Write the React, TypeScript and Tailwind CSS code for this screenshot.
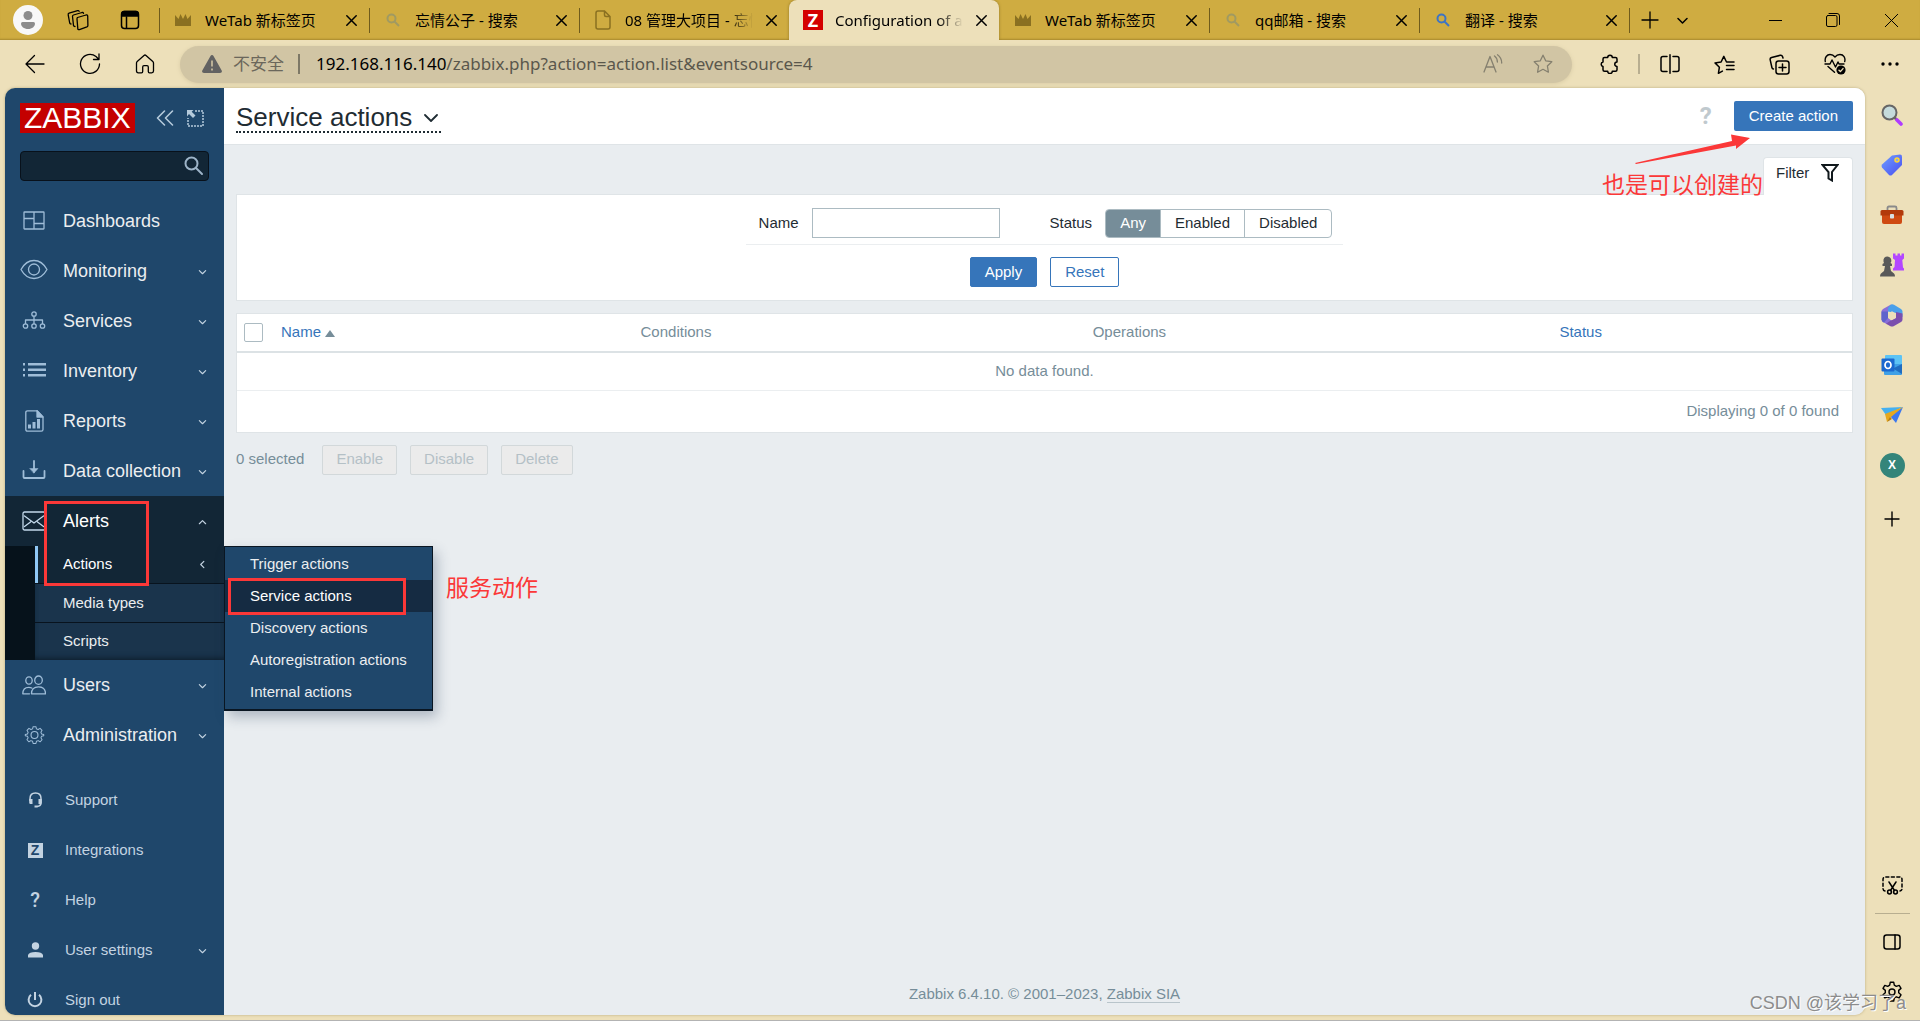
import type { ReactNode } from "react";
import { clsx } from "clsx";

type IconProps = { children: ReactNode; size?: number; box?: string; width?: number; className?: string };

// Line icon helper, every drawing below is stroked with the current colour
function Line({ children, size = 20, box = "0 0 20 20", width = 1.3, className }: IconProps) {
  return (
    <svg
      width={size}
      height={size}
      viewBox={box}
      fill="none"
      stroke="currentColor"
      strokeWidth={width}
      strokeLinecap="round"
      strokeLinejoin="round"
      className={clsx("shrink-0", className)}
      aria-hidden="true"
    >
      {children}
    </svg>
  );
}

const CrownIcon = () => (
  <svg width="16" height="12" viewBox="0 0 16 12" fill="#8a7021" aria-hidden="true">
    <path d="M0 1L3.500 5 5.500 0 8 5 10.500 0 12.500 5 16 1V12H0z" />
  </svg>
);

const TabSearchIcon = ({ color }: { color: string }) => (
  <svg width="14" height="14" viewBox="0 0 14 14" fill="none" stroke={color} strokeWidth="2" aria-hidden="true">
    <circle cx="5.500" cy="5.500" r="4" />
    <path d="M8.500 8.500l4.500 4.500" />
  </svg>
);

const PageIcon = () => (
  <svg width="16" height="20" viewBox="0 0 16 20" fill="none" stroke="#8a7021" strokeWidth="1.500" aria-hidden="true">
    <path d="M3 1h6.500L15 6.500V17a2 2 0 01-2 2H3a2 2 0 01-2-2V3a2 2 0 012-2zM9.500 1v4a1.500 1.500 0 001.500 1.500h4" />
  </svg>
);

const ZabbixFavicon = () => (
  <span className="flex h-5 w-5 items-center justify-center bg-[#d40000] text-lg leading-5 font-bold text-white">Z</span>
);

const tabs = [
  { title: "WeTab 新标签页", icon: <CrownIcon />, line: true },
  { title: "忘情公子 - 搜索", icon: <TabSearchIcon color="#a09a62" />, line: true },
  { title: "08 管理大项目 - 忘情", icon: <PageIcon />, line: true, fade: true },
  { title: "Configuration of actions", icon: <ZabbixFavicon />, active: true, fade: true },
  { title: "WeTab 新标签页", icon: <CrownIcon /> },
  { title: "qq邮箱 - 搜索", icon: <TabSearchIcon color="#a09a62" />, line: true },
  { title: "翻译 - 搜索", icon: <TabSearchIcon color="#3d74c4" />, line: true },
];

function TabBar() {
  return (
    <div className="flex h-10 shrink-0 items-stretch bg-[#cfac41] pl-[3px] shadow-[inset_0_-2px_2px_-1px_#a88a2e]">
      <button aria-label="Profile" className="flex w-[50px] items-center justify-center">
        <svg width="30" height="30" viewBox="0 0 30 30" aria-hidden="true">
          <circle cx="15" cy="15" r="15" fill="#f8f8f8" />
          <circle cx="15" cy="10.500" r="4.500" fill="#8c8c8c" />
          <path d="M8 18.500a1.500 1.500 0 011.500-1.500h11a1.500 1.500 0 011.500 1.500c0 3-3 5.500-7 5.500s-7-2.500-7-5.500z" fill="#8c8c8c" />
        </svg>
      </button>
      <button aria-label="Workspaces" className="flex w-[50px] items-center justify-center">
        <Line size={22} box="0 0 22 22">
          <path d="M10.500 8.500l8.500-2.500q1.500-.4 1.700 1l.2 9.500q0 1-1 1.400l-7.500 2.700q-1.500.4-1.600-1l-.8-9.600q0-1.100.5-1.500z" />
          <path d="M8 17.500q-1.200 0-1.500-1L5.500 7.500q0-1.200 1-1.500l8.500-2.500q1.200-.3 1.500.8" />
          <path d="M4 15q-1 0-1.300-1L1.200 5.800q-.2-1.300.9-1.600l8.500-2.500q1.100-.3 1.500.6" />
        </Line>
      </button>
      <button aria-label="Tab actions" className="flex w-[54px] items-center justify-center">
        <Line size={20} width={1.5}>
          <rect x="1.500" y="1.500" width="17" height="17" rx="3" />
          <path d="M2 3.500q0-2 2-2h12q2 0 2 2V6H2z" fill="currentColor" />
          <path d="M6.500 7v11" />
        </Line>
      </button>
      <div className="ml-0.5 flex max-w-[1470px] flex-1">
        {tabs.map((tab, i) => (
          <div
            key={i}
            className={clsx(
              "relative flex min-w-0 flex-1 items-center",
              tab.active && "rounded-t-lg bg-[#ede0ba] shadow-[0_0_3px_#8f7524] [clip-path:inset(0_-4px_0_-4px)]",
            )}
          >
            <span className={clsx("h-[25px] w-px", tab.line && "bg-[#6f5b1c]")} />
            <span className="ml-[13px] flex w-5 shrink-0 justify-center">{tab.icon}</span>
            <a
              href="#tab"
              className={clsx(
                "mr-2 ml-3 min-w-0 flex-1 overflow-hidden text-[15px] whitespace-nowrap text-black",
                tab.fade && "[mask-image:linear-gradient(to_right,black_80%,transparent)]",
              )}
            >
              {tab.title}
            </a>
            <button aria-label="Close tab" className="mr-2 flex w-5 justify-center">
              <Line size={11} box="0 0 11 11" width={1.5}>
                <path d="M.8.800l9.400 9.400M10.200.800L.8 10.200" />
              </Line>
            </button>
          </div>
        ))}
      </div>
      <span className="h-[25px] w-px self-center bg-[#6f5b1c]" />
      <button aria-label="New tab" className="ml-0.5 flex w-9 items-center justify-center">
        <Line size={18} box="0 0 18 18">
          <path d="M9 1v16M1 9h16" />
        </Line>
      </button>
      <button aria-label="Tab menu" className="flex w-7 items-center justify-center">
        <Line size={11} box="0 0 11 11" width={1.5}>
          <path d="M1 3.500l4.500 4.500L10 3.500" />
        </Line>
      </button>
      <div className="ml-auto flex">
        <button aria-label="Minimize" className="flex w-[58px] items-center justify-center">
          <Line size={13} box="0 0 13 13" width={1}>
            <path d="M0 6.500h13" />
          </Line>
        </button>
        <button aria-label="Restore" className="flex w-[58px] items-center justify-center">
          <Line size={14} box="0 0 14 14" width={1}>
            <rect x=".5" y="2.500" width="10.500" height="11" rx="1.500" />
            <path d="M3 .5h8q2.500 0 2.500 2.500v8.500" />
          </Line>
        </button>
        <button aria-label="Close" className="flex w-[58px] items-center justify-center">
          <Line size={13} box="0 0 13 13" width={1}>
            <path d="M0 0l13 13M13 0L0 13" />
          </Line>
        </button>
      </div>
    </div>
  );
}

const STAR = "M10 1.200l2.700 5.600 6.100.9-4.400 4.300 1 6.200L10 15.300l-5.400 2.900 1-6.200L1.200 7.700l6.100-.9z";

function AddressBar() {
  const slot = "flex h-full w-[55px] shrink-0 items-center justify-center";
  return (
    <div className="flex h-12 shrink-0 items-center pr-[3px] pl-[7px] text-black">
      <button aria-label="Back" className={slot}>
        <Line>
          <path d="M19 10H1M9.500 1.500L1 10l8.500 8.500" />
        </Line>
      </button>
      <button aria-label="Refresh" className={slot}>
        <Line size={22} box="0 0 22 22">
          <path d="M20.500 11A9.500 9.500 0 1117 3.500l2.500 2.500M20 1v5.500h-5.500" />
        </Line>
      </button>
      <button aria-label="Home" className={slot}>
        <Line size={20}>
          <path d="M1.500 9q0-1 .7-1.600L9 1.500q1-.9 2 0l6.800 5.900q.7.600.7 1.600v8q0 1.800-1.800 1.800h-2.200q-1.200 0-1.200-1.200V13q0-1.300-1.300-1.300H9q-1.300 0-1.300 1.300v4.600q0 1.200-1.200 1.200H3.300q-1.800 0-1.800-1.800z" />
        </Line>
      </button>
      <div className="mr-[10px] ml-2 flex h-[37px] min-w-0 flex-1 items-center rounded-full bg-[#d1c5a4] pr-1 pl-[22px] shadow-[0_1px_4px_#d8cba5]">
        <svg width="20" height="18" viewBox="0 0 20 18" aria-hidden="true">
          <path d="M10 0q1 0 1.500 1l8.200 14.500q.9 2.500-1.700 2.500H2q-2.600 0-1.700-2.500L8.500 1Q9 0 10 0z" fill="#626262" />
          <path d="M10 5.500v6M10 13.500v2" stroke="#d1c5a4" strokeWidth="1.600" />
        </svg>
        <button className="ml-[11px] text-[17px] text-[#6b675b]">不安全</button>
        <span className="ml-[14px] h-5 w-0.5 bg-[#7d7866]" />
        <div role="textbox" aria-label="Address" className="ml-4 min-w-0 flex-1 truncate text-[17px] text-[#5a574c]">
          <span className="text-black">192.168.116.140</span>/zabbix.php?action=action.list&amp;eventsource=4
        </div>
        <button aria-label="Read aloud" className="flex w-[50px] justify-center text-[#85806f]">
          <Line size={20}>
            <path d="M1 18L7 2.500 13 18M3 13h8M11.500 2q2.800 2 2.900 6M14.500.8Q18.600 3.500 18.700 9" />
          </Line>
        </button>
        <button aria-label="Favorite" className="flex w-[50px] justify-center text-[#85806f]">
          <Line size={20}>
            <path d={STAR} />
          </Line>
        </button>
      </div>
      <button aria-label="Extensions" className={slot}>
        <Line size={20} width={1.5}>
          <path d="M4.500 3.500h3.200a2.300 2.300 0 014.600 0h3.200q1.500 0 1.500 1.500v3a2 2 0 100 4.500v3.200q0 1.500-1.500 1.500h-3.200a2.300 2.300 0 01-4.600 0H4.500Q3 17.200 3 15.700v-3.200a2.300 2.300 0 010-4.500V5q0-1.500 1.500-1.500z" />
        </Line>
      </button>
      <span className="mr-0.5 ml-px h-5 w-0.5 shrink-0 bg-[#b8ae90]" />
      <button aria-label="Split screen" className={slot}>
        <Line size={20} width={1.5}>
          <path d="M7 2.500H3q-2 0-2 2v11q0 2 2 2h4M13 2.500h4q2 0 2 2v11q0 2-2 2h-4M10 .800v18.400" />
        </Line>
      </button>
      <button aria-label="Favorites" className={slot}>
        <Line size={21} box="0 0 21 20" width={1.5}>
          <path d="M13 7.500h-.5l-2.700-5.600-2.700 5.600-6.100.9 4.400 4.300-1 6.100 4-2.200M13 7.500h7M12.500 11h7.500M12.500 15h7.500" />
        </Line>
      </button>
      <button aria-label="Collections" className={slot}>
        <Line size={21} box="0 0 21 21" width={1.5}>
          <rect x="7" y="7" width="13" height="13" rx="2.500" />
          <path d="M13.500 10v7M10 13.500h7M4.500 15q-1.300-.2-1.600-1.500L1.200 5.800Q.8 4 2.600 3.500l8.600-2.200q1.700-.4 2.300 1.200l.5 1.500" />
        </Line>
      </button>
      <button aria-label="Browser essentials" className={slot}>
        <Line size={22} box="0 0 22 22" width={1.4}>
          <path d="M1.300 8.500C.5 4.500 3 1.500 6 1.500q3 0 5 2.500 2-2.500 5-2.500c3.500 0 5.700 3.200 4.700 7M1 11h5l2-4 3.500 7 2.500-5 1 2h5M4 13.500l6.500 5.800" />
          <circle cx="17" cy="17" r="4.600" fill="currentColor" stroke="none" />
          <path d="M15 17.200l1.400 1.400 2.600-3" stroke="#ede0ba" />
        </Line>
      </button>
      <button aria-label="Settings and more" className={slot}>
        <svg width="18" height="4" viewBox="0 0 18 4" aria-hidden="true">
          <circle cx="2" cy="2" r="1.700" />
          <circle cx="9" cy="2" r="1.700" />
          <circle cx="16" cy="2" r="1.700" />
        </svg>
      </button>
    </div>
  );
}

const Chevron = ({ d = "M1.500 4L5 7.500 8.500 4" }: { d?: string }) => (
  <Line size={9} box="0 0 10 10" width={1.3} className="ml-auto text-[#c3d3e1]">
    <path d={d} />
  </Line>
);

const menuIcons = {
  dashboards: (
    <Line size={24} box="0 0 24 20" width={1.3}>
      <path d="M2.500 1h19q.5 0 .5.500v16q0 .500-.5.500h-19Q2 18 2 17.500v-16q0-.5.500-.5zM12 1v17M2 7.500h10M12 12.500h10" />
    </Line>
  ),
  monitoring: (
    <Line size={28} box="0 0 28 22" width={1.3}>
      <path d="M1 9.500q5-9 13-9t13 9q-5 9-13 9t-13-9z" />
      <circle cx="14" cy="9.500" r="5.500" />
    </Line>
  ),
  services: (
    <Line size={24} box="0 0 24 20" width={1.3}>
      <circle cx="12" cy="3" r="2.200" />
      <circle cx="3.500" cy="15" r="2.200" />
      <circle cx="12" cy="15" r="2.200" />
      <circle cx="20.500" cy="15" r="2.200" />
      <path d="M12 5.500v7M3.500 12.500V9h17v3.500" />
    </Line>
  ),
  inventory: (
    <svg width="24" height="18" viewBox="0 0 24 18" fill="currentColor" aria-hidden="true">
      <path d="M1 1h2v2.500H1zM1 6.500h2V9H1zM1 12h2v2.500H1zM6 1h18v2.500H6zM6 6.500h18V9H6zM6 12h18v2.500H6z" />
    </svg>
  ),
  reports: (
    <Line size={23} box="0 0 20 23" width={1.3}>
      <path d="M3 .800h9.500L18.500 7v12.500q0 1.700-1.700 1.700H3q-1.700 0-1.700-1.700v-17Q1.300.800 3 .800z" />
      <path d="M12.500.800V7h6z" fill="currentColor" />
      <path d="M5 14.500v4M9.500 12v6.500M14 9v9.500" strokeWidth="3" strokeLinecap="butt" />
    </Line>
  ),
  data: (
    <Line size={24} box="0 0 24 22" width={1.8}>
      <path d="M1.500 11v6q0 1 1 1h19q1 0 1-1v-6M12 1v11" />
      <path d="M8 8.500h8l-4 4.500z" fill="currentColor" strokeWidth=".5" />
    </Line>
  ),
  alerts: (
    <Line size={24} box="0 0 24 20" width={1.3}>
      <rect x="1" y="1" width="22" height="18" rx="1.500" />
      <path d="M2.500 5l9.500 7 9.500-7M2.500 15.500l6-4.500M21.500 15.500l-6-4.500" />
    </Line>
  ),
  users: (
    <Line size={24} box="0 0 24 20" width={1.3}>
      <ellipse cx="7" cy="5.500" rx="3.200" ry="3.700" />
      <ellipse cx="16.500" cy="5.200" rx="3.800" ry="4.200" />
      <path d="M9.500 18.800q0-7 7-7t7 7zM7.500 18.800H.8q0-6.500 6-6.500 1.700 0 3 .700" />
    </Line>
  ),
  administration: (
    <Line size={21} box="0 0 22 23" width={1.2}>
      <circle cx="11" cy="11" r="3.800" />
      <path
        d="M9.300 1h3.400l.6 2.600 2 .8 2.300-1.400 2.400 2.400-1.400 2.300.8 2 2.600.6v1.400l-2.600.6-.8 2 1.400 2.300-2.400 2.400-2.300-1.400-2 .8-.6 2.600H9.300l-.6-2.600-2-.8L4.400 19 2 16.600l1.400-2.300-.8-2L0 11.700v-1.400l2.600-.6.8-2L2 5.400 4.400 3l2.300 1.400 2-.8z"
        transform="translate(.9 .9) scale(.92)"
      />
    </Line>
  ),
};

const menuTop = [
  { label: "Dashboards", icon: menuIcons.dashboards, leaf: true },
  { label: "Monitoring", icon: menuIcons.monitoring },
  { label: "Services", icon: menuIcons.services },
  { label: "Inventory", icon: menuIcons.inventory },
  { label: "Reports", icon: menuIcons.reports },
  { label: "Data collection", icon: menuIcons.data },
];

const menuBottom = [
  { label: "Users", icon: menuIcons.users },
  { label: "Administration", icon: menuIcons.administration },
];

const actionPages = ["Trigger actions", "Service actions", "Discovery actions", "Autoregistration actions", "Internal actions"];

const support = [
  {
    label: "Support",
    icon: (
      <svg width="15" height="16" viewBox="0 0 15 16" aria-hidden="true">
        <path d="M2 9V6.500Q2 1 7.500 1T13 6.500V11q0 3-4 3.500" fill="none" stroke="currentColor" strokeWidth="1.500" />
        <path d="M1.200 7h3.300v5H2.500q-1.300 0-1.300-1.500zM10.500 7h3.300v3.500q0 1.500-1.300 1.500h-2zM6.500 13.500h3V15.500h-3z" fill="currentColor" />
      </svg>
    ),
  },
  {
    label: "Integrations",
    icon: (
      <span className="flex h-[15px] w-[15px] items-center justify-center bg-[#c3d3e1] text-sm leading-none font-bold text-[#1f476b]">
        Z
      </span>
    ),
  },
  { label: "Help", icon: <span className="text-xl leading-none font-medium [font-family:Roboto,sans-serif]">?</span> },
  {
    label: "User settings",
    expandable: true,
    icon: (
      <svg width="15" height="16" viewBox="0 0 15 16" fill="currentColor" aria-hidden="true">
        <circle cx="7.500" cy="4" r="3.700" />
        <path d="M0 15.500V13q1-3 7.500-3t7.500 3v2.500z" />
      </svg>
    ),
  },
  {
    label: "Sign out",
    icon: (
      <svg width="16" height="16" viewBox="0 0 16 16" fill="none" stroke="currentColor" strokeWidth="2" aria-hidden="true">
        <path d="M8 0v8M4 2.800a6.400 6.400 0 108 0" />
      </svg>
    ),
  },
];

function MenuItem({ label, icon, leaf }: { label: string; icon: ReactNode; leaf?: boolean }) {
  return (
    <li>
      <a href="#menu" className="flex h-[50px] items-center pr-[17px] pl-[15px] text-lg text-[#ebeef0]">
        <span className="mr-[15px] flex w-7 justify-center text-[#9fbdd8]">{icon}</span>
        {label}
        {!leaf && <Chevron />}
      </a>
    </li>
  );
}

function Sidebar() {
  return (
    <aside className="relative z-10 w-[219px] shrink-0 bg-[#1f476b] pt-[15px]">
      <div className="flex items-center px-[15px]">
        <a href="#home" className="flex h-[30px] items-center bg-[#c40000] px-1 text-[30px] leading-[30px] text-white">
          ZABBIX
        </a>
        <button aria-label="Collapse sidebar" className="ml-5 text-[#b5cadb]">
          <Line size={20} width={1.6}>
            <path d="M9.500 3L2.500 10l7 7M17.500 3L10.500 10l7 7" />
          </Line>
        </button>
        <button aria-label="Hide sidebar" className="ml-3 text-[#b5cadb]">
          <svg width="17" height="17" viewBox="0 0 17 17" fill="none" stroke="currentColor" aria-hidden="true">
            <path d="M8 1h8v15H1V8" strokeWidth="1.500" strokeDasharray="2 1" />
            <path d="M0 0h6.500L4.700 1.800 8.500 5.600 6 8 2 4 .0 6.500z" fill="currentColor" stroke="none" />
          </svg>
        </button>
      </div>
      <form className="mx-[15px] mt-[18px] flex h-[30px] items-center rounded-sm border border-[#08111b] bg-[#122636] pr-1">
        <input
          type="text"
          aria-label="Search"
          className="min-w-0 flex-1 bg-transparent px-2 text-[15px] text-white outline-none"
        />
        <button aria-label="Run search" type="button" className="text-[#9db4c8]">
          <Line size={20} width={2}>
            <circle cx="7.500" cy="7.500" r="6" />
            <path d="M12 12l6 6" />
          </Line>
        </button>
      </form>
      <nav className="mt-[15px]">
        <ul>
          {menuTop.map((item) => (
            <MenuItem key={item.label} {...item} />
          ))}
          <li className="relative">
            <a href="#alerts" className="flex h-[50px] items-center bg-[#122636] pr-[17px] pl-[15px] text-lg text-white">
              <span className="mr-[15px] flex w-7 justify-center text-[#c3d9ec]">{menuIcons.alerts}</span>
              Alerts
              <Chevron d="M1.500 7.500L5 4l3.500 3.500" />
            </a>
            <ul className="border-l-[30px] border-[#06121b] bg-[#1a344c] text-[15px] text-[#ebeef0] shadow-[inset_0_5px_6px_-4px_#0b1a27,inset_0_-5px_6px_-4px_#0b1a27]">
              <li className="flex h-[38px] border-b border-[#08131e] bg-[#122636]">
                <a href="#actions" className="flex flex-1 items-center border-l-[3px] border-[#8fc7f5] pr-[17px] pl-[25px] text-white">
                  Actions
                  <Chevron d="M6.500 1.500L3 5l3.500 3.500" />
                </a>
              </li>
              <li className="flex h-[39px] items-center border-b border-[#08131e] pl-7">
                <a href="#media">Media types</a>
              </li>
              <li className="flex h-[37px] items-center pl-7">
                <a href="#scripts">Scripts</a>
              </li>
            </ul>
            <ul className="absolute top-[50px] left-full w-[209px] border-x border-t border-b-2 border-[#0a1622] bg-[#1f476b] py-px text-[15px] text-[#ebeef0] shadow-[4px_6px_12px_rgba(40,60,90,0.3)]">
              {actionPages.map((page) => (
                <li key={page} className={clsx("flex h-8 items-center pl-[25px]", page === "Service actions" && "bg-[#152b42] text-white")}>
                  <a href="#page">{page}</a>
                </li>
              ))}
            </ul>
            {/* red marks over the menu */}
            <span className="absolute top-[5px] left-[39px] h-[85px] w-[105px] border-[3px] border-[#fb3838]" />
            <span className="absolute top-[82px] left-[223px] h-[37px] w-[178px] border-[3px] border-[#fb3838]" />
            <span className="absolute top-[75px] left-[441px] text-[23px] whitespace-nowrap text-[#fb3838]">服务动作</span>
          </li>
          {menuBottom.map((item) => (
            <MenuItem key={item.label} {...item} />
          ))}
        </ul>
        <ul className="mt-[15px]">
          {support.map((item) => (
            <li key={item.label}>
              <a href="#support" className="flex h-[50px] items-center pr-[17px] pl-[15px] text-[15px] text-[#c3d3e1]">
                <span className="mr-[15px] flex w-[30px] justify-center">{item.icon}</span>
                {item.label}
                {item.expandable && <Chevron />}
              </a>
            </li>
          ))}
        </ul>
      </nav>
    </aside>
  );
}

function Filter() {
  return (
    <>
      <div className="flex justify-end">
        <a
          href="#filter"
          className="relative -mb-px flex h-[38px] w-[90px] items-start rounded-t-sm border border-b-0 border-[#dfe4e7] bg-white pt-[6px] pl-3 leading-[18px]"
        >
          Filter
          <svg width="18" height="18" viewBox="0 0 18 18" fill="none" stroke="#10181c" strokeWidth="2" className="ml-3" aria-hidden="true">
            <path d="M1.500 1h15L11 8V16.500L7.500 14.500V8z" />
          </svg>
        </a>
      </div>
      <form className="flex flex-col items-center border border-[#dfe4e7] bg-white py-[13px]">
        <div className="flex items-center border-b border-[#ebeef0] pr-[11px] pb-[6px] pl-[13px]">
          <label htmlFor="name">Name</label>
          <input id="name" type="text" className="ml-[13px] h-[30px] w-[188px] border border-[#acbbc2] px-1" />
          <div role="radiogroup" aria-labelledby="status-label" className="ml-[50px] flex items-center">
            <span id="status-label">Status</span>
            <div className="ml-[13px] flex h-[29px] overflow-hidden rounded-sm border border-[#acbbc2]">
              {["Any", "Enabled", "Disabled"].map((value) => (
                <label
                  key={value}
                  className="flex items-center border-l border-[#acbbc2] px-[14px] first:border-l-0 has-checked:bg-[#768d99] has-checked:text-white"
                >
                  <input type="radio" name="status" defaultChecked={value === "Any"} className="absolute appearance-none" />
                  {value}
                </label>
              ))}
            </div>
          </div>
        </div>
        <div className="mt-3 flex gap-[13px]">
          <button type="button" className="h-[30px] rounded-xs border border-[#3675ba] bg-[#3675ba] px-[14px] text-white">
            Apply
          </button>
          <button type="button" className="h-[30px] rounded-xs border border-[#3675ba] px-[14px] text-[#3675ba]">
            Reset
          </button>
        </div>
      </form>
    </>
  );
}

function ActionsTable() {
  return (
    <div className="mt-3 border border-[#dfe4e7] bg-white text-[#768d99]">
      <table className="w-full table-fixed border-collapse text-left">
        <colgroup>
          <col className="w-9" />
          <col className="w-[22.2%]" />
          <col className="w-[28%]" />
          <col className="w-[28.9%]" />
          <col />
        </colgroup>
        <thead>
          <tr className="h-[38px] border-b-2 border-[#dce2e5]">
            <th className="pl-[7px]">
              <input
                type="checkbox"
                aria-label="Select all"
                className="block h-[19px] w-[19px] appearance-none rounded-xs border border-[#acbbc2] bg-white"
              />
            </th>
            <th className="pl-2 font-normal">
              <a href="#name" className="flex items-center text-[#3675ba]">
                Name
                <svg width="10" height="7" viewBox="0 0 10 7" fill="#768d99" className="mt-0.5 ml-1" aria-hidden="true">
                  <path d="M5 0l5 7H0z" />
                </svg>
              </a>
            </th>
            <th className="pl-[9px] font-normal">Conditions</th>
            <th className="pl-[9px] font-normal">Operations</th>
            <th className="pl-[9px] font-normal">
              <a href="#status" className="text-[#3675ba]">
                Status
              </a>
            </th>
          </tr>
        </thead>
        <tbody>
          <tr className="h-[38px] border-b border-[#ebeef0]">
            <td colSpan={5} className="text-center">
              No data found.
            </td>
          </tr>
        </tbody>
      </table>
      <div className="flex h-[41px] items-center justify-end pr-[13px]">Displaying 0 of 0 found</div>
    </div>
  );
}

function Main() {
  return (
    <main className="relative flex min-w-0 flex-1 flex-col bg-[#e9edf0] text-[15px] text-[#1f2c33]">
      <header className="flex h-[57px] shrink-0 items-center border-b border-[#dfe4e7] bg-white px-3">
        <h1>
          <button className="flex items-center gap-3 border-b-2 border-dotted border-[#1f2c33] pt-[3px] pr-[3px] text-[26px] leading-[28px]">
            Service actions
            <Line size={14} box="0 0 14 14" width={1.8}>
              <path d="M1 5l6 6 6-6" />
            </Line>
          </button>
        </h1>
        <a
          href="#help"
          aria-label="Help"
          className="mr-[22px] ml-auto text-2xl leading-none font-bold text-[#c0c9ce] [font-family:Roboto,sans-serif]"
        >
          ?
        </a>
        <button className="h-[30px] rounded-xs bg-[#3675ba] px-[15px] text-white">Create action</button>
      </header>
      {/* red note that points at the create button */}
      <div className="absolute top-[46px] right-[102px] z-10 flex flex-col items-end text-[#fb3838]">
        <svg width="118" height="32" viewBox="0 0 118 32" fill="currentColor" className="mr-3" aria-hidden="true">
          <path d="M2 29L99 7l-1-6.500L117 4l-14 11v-3.500L3 30z" />
        </svg>
        <span className="mt-1 text-[23px] leading-[30px]">也是可以创建的</span>
      </div>
      <div className="flex flex-1 flex-col px-3 pt-3 pb-[11px]">
        <Filter />
        <ActionsTable />
        <div className="mt-3 flex items-center gap-[13px]">
          <span className="mr-[5px] text-[#768d99]">0 selected</span>
          {["Enable", "Disable", "Delete"].map((label) => (
            <button key={label} disabled className="h-[30px] rounded-xs border border-[#d2d8da] bg-[#ebebeb] px-[13px] text-[#b4c0c6]">
              {label}
            </button>
          ))}
        </div>
        <footer className="mt-auto text-center leading-5 text-[#768d99]">
          Zabbix 6.4.10. © 2001–2023,{" "}
          <a href="#zabbix" className="border-b border-[#b9c5cb]">
            Zabbix SIA
          </a>
        </footer>
      </div>
    </main>
  );
}

const apps = [
  {
    label: "Search",
    icon: (
      <svg width="22" height="22" viewBox="0 0 22 22" aria-hidden="true">
        <path d="M13.500 13.500l2 2" stroke="#666" strokeWidth="2.500" />
        <path d="M16 16l4 4" stroke="#b03bff" strokeWidth="3.600" strokeLinecap="round" />
        <circle cx="8.500" cy="8.500" r="7" fill="#c5dbdc" stroke="#666" strokeWidth="2" />
      </svg>
    ),
  },
  {
    label: "Shopping",
    icon: (
      <svg width="22" height="22" viewBox="0 0 22 22" aria-hidden="true">
        <defs>
          <linearGradient id="tag" x1="0" y1="0" x2="1" y2="1">
            <stop offset="0" stopColor="#6fa0ff" />
            <stop offset="1" stopColor="#4a4df0" />
          </linearGradient>
        </defs>
        <path d="M11 1.500L19 .500q2 0 2 2v8.500L11 21q-1.500 1-3 0L1 13.500q-1-1.500 0-3z" fill="url(#tag)" />
        <circle cx="16" cy="6" r="2" fill="#8ba7e8" stroke="#ffd633" strokeWidth="1.500" />
      </svg>
    ),
  },
  {
    label: "Tools",
    icon: (
      <svg width="24" height="20" viewBox="0 0 24 20" aria-hidden="true">
        <path d="M7.500 6V3q0-1.500 1.500-1.500h6q1.500 0 1.500 1.500v3" fill="none" stroke="#8a8a8a" strokeWidth="1.800" />
        <path d="M2 8h20v9q0 2-2 2H4q-2 0-2-2z" fill="#cf4a12" />
        <path d="M2 5h20q1.500 0 1.500 1.500v4H.500v-4Q.500 5 2 5z" fill="#b23a0b" />
        <rect x="10" y="9" width="4" height="4.500" rx=".8" fill="#d8e0e4" />
      </svg>
    ),
  },
  {
    label: "Games",
    icon: (
      <svg width="24" height="24" viewBox="0 0 24 24" aria-hidden="true">
        <path d="M13 .5h2.500v2h2v-2H20v2h1.500v-2H24v5l-1.700 1.500.7 7.500 1 1v2H13v-2l1.500-1.500.5-7L13 5.500z" fill="#b347ff" />
        <path d="M3.500 6.500a4 4 0 117 3.500l1.500 1v2h-2l1 5 3 2.500q1 1 1 3H0q0-2 1-3l3-2.500 1-5H2.500v-2L4 10q-.8-1.500-.5-3.500z" fill="#595959" />
      </svg>
    ),
  },
  {
    label: "Microsoft 365",
    icon: (
      <svg width="22" height="23" viewBox="0 0 22 23" aria-hidden="true">
        <path d="M10 .500L2 5Q.5 6 .5 7.500v8q0 1.500 1.500 2.500l4 2.300L11 17l-4-3V7.500L12 4z" fill="#8a6fd8" />
        <path d="M10 .500q1.500-.5 3 .3L20 5q1.500 1 1.500 2.500V13L15 9 7 7.500V4z" fill="#4aa0ea" />
        <path d="M21.500 9.500v6q0 1.500-1.500 2.500l-7 4q-2 1-4 0l-4-2.200 4-2.800 6-3V8z" fill="#7b4fae" />
        <path d="M7 7.500l-6.500 0v8Q1 18 3 18.500L7 14z" fill="#5f63cc" />
        <path d="M11 7.200l3.800 2.200v4.300L11 15.800l-3.800-2.100V9.400z" fill="#ede0ba" />
      </svg>
    ),
  },
  {
    label: "Outlook",
    icon: (
      <svg width="22" height="22" viewBox="0 0 22 22" aria-hidden="true">
        <path d="M5 1h15q1 0 1 1v9H4V2q0-1 1-1z" fill="#5cc3f5" />
        <path d="M3 10h18v10q0 1-1 1H4q-1 0-1-1z" fill="#3fa0e6" />
        <path d="M21 10v10L12 14.500z" fill="#1f6cc0" />
        <rect x=".5" y="4.500" width="13" height="13" rx="1" fill="#1b68cf" />
        <ellipse cx="7" cy="11" rx="3" ry="3.500" fill="none" stroke="#fff" strokeWidth="1.700" />
      </svg>
    ),
  },
  {
    label: "Drop",
    icon: (
      <svg width="22" height="18" viewBox="0 0 22 18" aria-hidden="true">
        <path d="M0 2L22 1 5 9z" fill="#45b0f0" />
        <path d="M22 1L9 10l6 7z" fill="#3c78ee" />
        <path d="M22 1L4 8l2 8 4-5z" fill="#e7a81c" />
        <path d="M6 16l3-5 2 2z" fill="#b57a10" />
      </svg>
    ),
  },
];

function EdgeRail() {
  const slot = "flex h-[50px] w-full shrink-0 items-center justify-center";
  return (
    <aside className="flex w-[55px] shrink-0 flex-col items-center pt-0.5 pr-px pb-[3px] text-black">
      {apps.map((app) => (
        <button key={app.label} aria-label={app.label} className={slot}>
          {app.icon}
        </button>
      ))}
      <button className={slot}>
        <span className="flex h-[25px] w-[25px] items-center justify-center rounded-full bg-[#34857a] text-xs font-bold text-white">X</span>
      </button>
      <button aria-label="Customize" className={clsx(slot, "mt-1")}>
        <Line size={16} box="0 0 16 16" width={1.4}>
          <path d="M8 1v14M1 8h14" />
        </Line>
      </button>
      <button aria-label="Screenshot" className={clsx(slot, "mt-auto")}>
        <Line size={21} box="0 0 21 20" width={1.5}>
          <path d="M3 15.500q-2-.3-2-2.500V4q0-2.500 2.500-2.500h14Q20 1.500 20 4v9q0 2.200-2 2.500" strokeDasharray="3 2.500" />
          <path d="M7 6.500l5.500 8.500M14 6.500L8.500 15" />
          <circle cx="7.500" cy="16.500" r="1.900" />
          <circle cx="13.500" cy="16.500" r="1.900" />
        </Line>
      </button>
      <span className="my-[3px] h-px w-[35px] shrink-0 bg-[#b8ae90]" />
      <button aria-label="Sidebar" className={slot}>
        <Line size={18} box="0 0 18 18" width={1.5}>
          <rect x="1" y="2" width="16" height="14" rx="2.500" />
          <path d="M12 2v14" />
        </Line>
      </button>
      <button aria-label="Settings" className={slot}>
        <Line size={22} box="0 0 22 22" width={1.4}>
          <circle cx="11" cy="11" r="3" />
          <path d="M9.300 1.200h3.400l.6 3 2 1.200 2.900-1 1.800 3-2.300 2v2.400l2.300 2-1.800 3-2.900-1-2 1.200-.6 3H9.300l-.6-3-2-1.200-2.900 1-1.800-3 2.300-2V9.400L2 7.400l1.800-3 2.900 1 2-1.200z" />
        </Line>
      </button>
    </aside>
  );
}

export default function App() {
  return (
    <div className="relative flex h-screen flex-col overflow-hidden border-b border-[#b3b3b3] bg-[#ede0ba] [font-family:'Liberation_Sans','Noto_Sans_CJK_SC',sans-serif]">
      <div className="[font-family:'Noto_Sans','Noto_Sans_CJK_SC',sans-serif]">
        <TabBar />
        <AddressBar />
      </div>
      <div className="flex min-h-0 flex-1 pl-[5px]">
        <div className="mb-[5px] flex min-w-0 flex-1 overflow-hidden rounded-[10px] shadow-[0_0_3px_#b9ab80]">
          <Sidebar />
          <Main />
        </div>
        <EdgeRail />
      </div>
      <p className="absolute right-[14px] bottom-[5px] text-[18px] leading-6 text-[#8c8c8c] [text-shadow:1px_1px_0_white]">CSDN @该学习了a</p>
    </div>
  );
}
